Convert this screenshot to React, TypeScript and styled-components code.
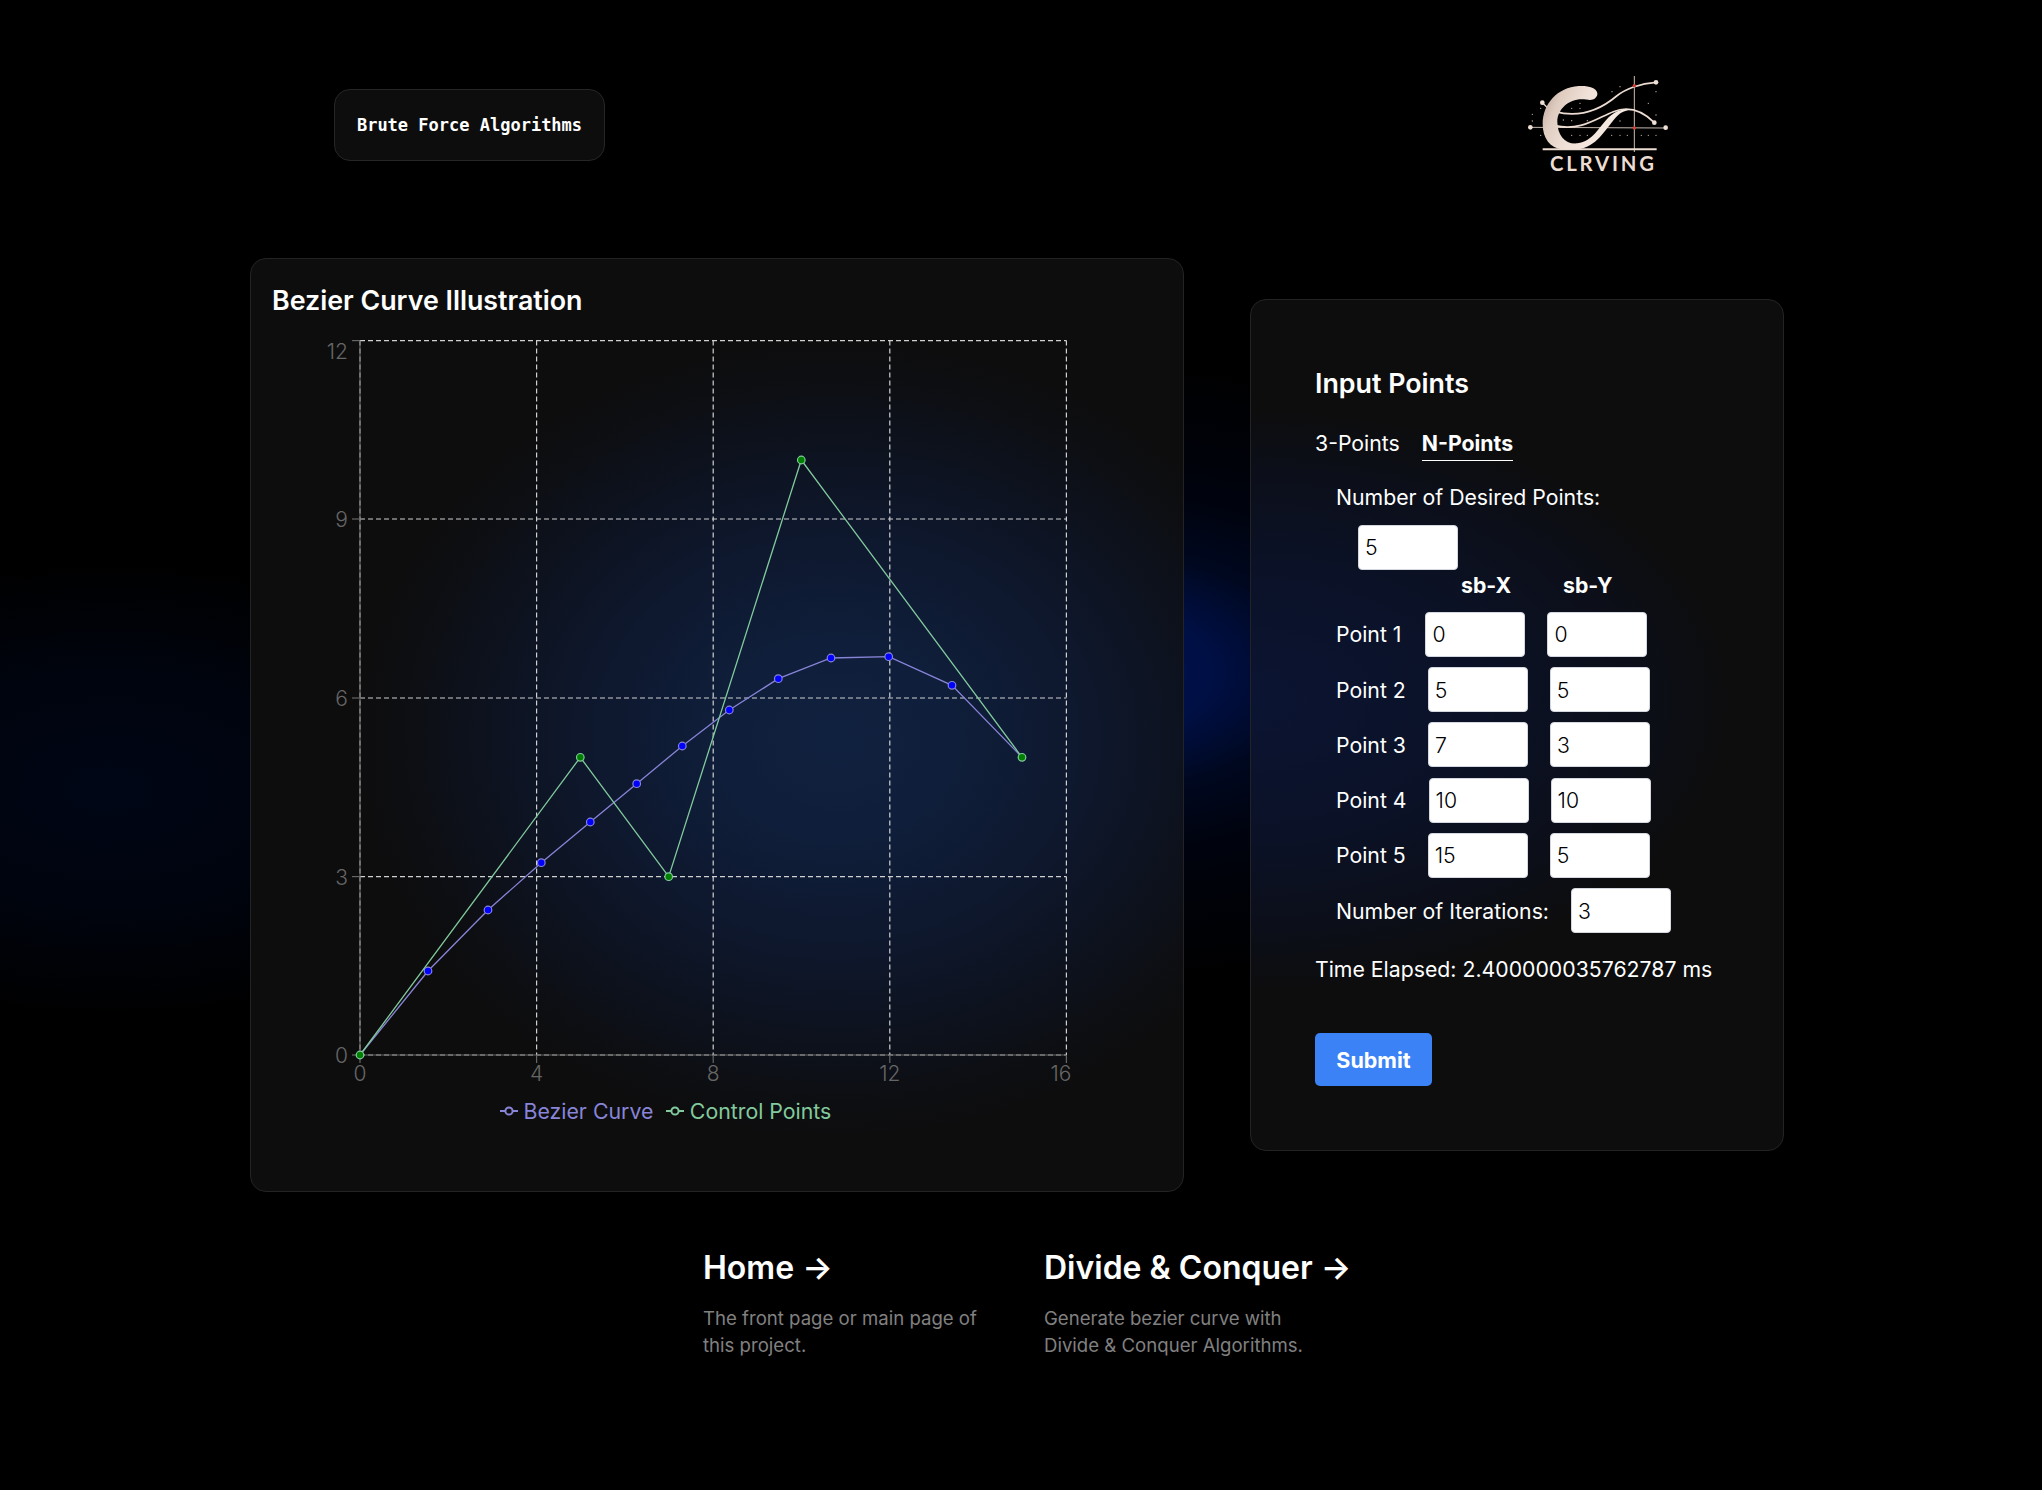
import React from "react";
import styled, { createGlobalStyle } from "styled-components";

const Global = createGlobalStyle`
  html, body { margin: 0; padding: 0; background: #000; }
  body { font-family: Inter, "Noto Sans", sans-serif; color: #fff; }
  * { box-sizing: border-box; }
`;

const Page = styled.div`
  width: 2042px;
  height: 1490px;
  overflow: hidden;
  background:
    radial-gradient(ellipse 760px 320px at 1000px 672px,
      rgba(0, 22, 96, 1) 0%, rgba(0, 15, 68, 1) 28%, rgba(0, 8, 32, 1) 42%, rgba(0, 3, 14, 1) 60%, rgba(0, 0, 0, 0) 100%),
    radial-gradient(ellipse 420px 230px at 110px 790px,
      rgba(0, 6, 22, 1) 0%, rgba(0, 4, 14, 1) 50%, rgba(0, 0, 0, 0) 100%),
    #000;
`;

const Header = styled.header`
  display: flex;
  justify-content: space-between;
  align-items: center;
  height: 190px;
  padding: 60px 342px 0 334px;
`;

const Badge = styled.div`
  width: 271px;
  height: 72px;
  display: flex;
  align-items: center;
  justify-content: center;
  background: #0d0d0d;
  border: 1px solid #262626;
  border-radius: 16px;
  font-family: "DejaVu Sans Mono", monospace;
  font-weight: 700;
  font-size: 17px;
`;

const Main = styled.main`
  display: flex;
  align-items: center;
  gap: 66px;
  margin-top: 68px;
  padding-left: 250px;
`;

const ChartCard = styled.section`
  width: 934px;
  height: 934px;
  padding: 25px 21px 0;
  border: 1px solid #232323;
  border-radius: 16px;
  background:
    radial-gradient(ellipse 480px 400px at 585px 480px,
      #10213f 0%, #0f1e3a 25%, #0e182e 50%, #0d121e 74%, #0d0e11 92%, #0d0d0e 100%),
    #0d0d0d;
`;

const CardTitle = styled.h2`
  margin: 0;
  font-size: 26.8px;
  line-height: 32px;
  font-weight: 600;
`;

const ChartSvg = styled.svg`
  display: block;
  width: 840px;
  height: 780px;
`;

const AxisText = styled.text`
  font-family: Inter, sans-serif;
  font-size: 21px;
  font-weight: 300;
  fill: #666;
`;

const Legend = styled.div`
  display: flex;
  align-items: center;
  margin: 2px 0 0 228px;
  font-size: 21.3px;
  line-height: 26px;
  font-weight: 400;
`;

const LegendItem = styled.div<{ $color: string }>`
  display: flex;
  align-items: center;
  gap: 5.5px;
  margin-right: 13px;
  color: ${(p) => p.$color};
`;

const InputCard = styled.section`
  width: 534px;
  padding: 67px 64px 64px;
  border: 1px solid #232323;
  border-radius: 16px;
  background:
    radial-gradient(ellipse 480px 290px at 0px 400px,
      #0b1432 0%, #0b1228 45%, #0c0f1a 78%, #0d0d0e 100%),
    #0d0d0d;
`;

const TabRow = styled.div`
  display: flex;
  gap: 22px;
  margin-top: 32px;
`;

const Tab = styled.div<{ $active?: boolean }>`
  font-size: 21.25px;
  line-height: 24px;
  padding-bottom: 5px;
  font-weight: ${(p) => (p.$active ? 700 : 400)};
  border-bottom: 1px solid ${(p) => (p.$active ? "#fff" : "transparent")};
`;

const Form = styled.div`
  display: flex;
  flex-direction: column;
  padding-left: 21px;
  margin-top: 24px;
`;

const Label = styled.label`
  font-size: 21.25px;
  line-height: 24px;
  white-space: nowrap;
`;

const NumberInput = styled.input`
  width: 100px;
  height: 45px;
  padding: 0 6px;
  border: 1px solid #d4d7e0;
  border-radius: 4px;
  background: #fff;
  color: #000;
  font-family: Inter, sans-serif;
  font-size: 21.25px;
  font-weight: 300;
`;

const DesiredInput = styled(NumberInput)`
  margin: 16px 0 0 22px;
`;

const AxisHeader = styled.div`
  display: flex;
  gap: 52px;
  padding-left: 125px;
  margin-top: 3px;
  font-size: 21.25px;
  line-height: 24px;
  font-weight: 700;
`;

const Rows = styled.div`
  display: flex;
  flex-direction: column;
  gap: 10.25px;
  margin-top: 15px;
`;

const Row = styled.div<{ $labelGap?: number }>`
  display: flex;
  align-items: center;
  gap: 22px;
  label { margin-right: ${(p) => p.$labelGap ?? 0}px; }
`;

const Elapsed = styled.div`
  margin-top: 24px;
  font-size: 21.25px;
  line-height: 24px;
  white-space: nowrap;
`;

const Submit = styled.button`
  display: block;
  width: 117px;
  height: 53px;
  margin-top: 52px;
  border: 0;
  border-radius: 5px;
  background: #3b82f6;
  color: #fff;
  font-family: Inter, sans-serif;
  font-size: 21.5px;
  font-weight: 700;
`;

const Footer = styled.nav`
  display: flex;
  margin-top: 58px;
  padding-left: 703px;
`;

const FooterLink = styled.a`
  display: block;
  width: 341px;
  color: #fff;
  text-decoration: none;
`;

const LinkTitle = styled.h3`
  margin: 0;
  font-size: 32px;
  line-height: 36px;
  font-weight: 600;
`;

const LinkText = styled.p`
  margin: 19px 0 0;
  width: 290px;
  font-size: 18.6px;
  line-height: 27px;
  color: #808080;
`;

const X = [360, 536.6, 713.2, 889.8, 1066.4];
const Y = [1055, 876.6, 698, 519, 340.6];
const XL = ["0", "4", "8", "12", "16"];
const YL = ["0", "3", "6", "9", "12"];

const bezier: [number, number][] = [
  [360, 1055], [428, 971], [488, 910], [541.3, 862.7], [590.3, 822], [636.7, 783.7], [682.3, 746],
  [729.3, 710], [778.3, 678.7], [831, 658], [888.7, 656.7], [952, 685.3], [1022, 757.3],
];
const control: [number, number][] = [
  [360, 1055], [580.3, 757.3], [668.7, 876.7], [801.3, 460], [1022, 757.3],
];
const pts = (a: [number, number][]) => a.map((p) => p.join(",")).join(" ");

const Chart = () => (
  <ChartSvg viewBox="272 316 840 780">
    <g stroke="#d0d0d0" strokeWidth="1.2" strokeDasharray="5 3" fill="none">
      {Y.map((y) => <line key={y} x1={360} x2={1066.4} y1={y} y2={y} />)}
      {X.map((x) => <line key={x} x1={x} x2={x} y1={340.6} y2={1055} />)}
    </g>
    <g stroke="#666" strokeWidth="1.2">
      <line x1={360} x2={360} y1={340.6} y2={1055} />
      <line x1={360} x2={1066.4} y1={1055} y2={1055} />
      {Y.map((y) => <line key={y} x1={352} x2={360} y1={y} y2={y} />)}
      {X.map((x) => <line key={x} x1={x} x2={x} y1={1055} y2={1063} />)}
    </g>
    {Y.map((y, i) => (
      <AxisText key={y} x={348} y={(i === 4 ? y + 10 : y) + 8} textAnchor="end">{YL[i]}</AxisText>
    ))}
    {X.map((x, i) => (
      <AxisText key={x} x={i === 4 ? 1061 : x} y={1081} textAnchor="middle">{XL[i]}</AxisText>
    ))}
    <polyline points={pts(bezier)} fill="none" stroke="#8884d8" strokeWidth="1.3" />
    {bezier.map((p, i) => (
      <circle key={i} cx={p[0]} cy={p[1]} r="3.8" fill={i === 0 || i === 12 ? "none" : "#0000ff"} stroke={i === 0 || i === 12 ? "none" : "#8884d8"} strokeWidth="1.2" />
    ))}
    <polyline points={pts(control)} fill="none" stroke="#82ca9d" strokeWidth="1.3" />
    {control.map((p, i) => (
      <circle key={i} cx={p[0]} cy={p[1]} r="3.8" fill="#008000" stroke="#82ca9d" strokeWidth="1.2" />
    ))}
  </ChartSvg>
);

const LegendIcon = ({ color }: { color: string }) => (
  <svg width="18" height="14" viewBox="0 0 18 14">
    <path d="M0 7h5M13 7h5" stroke={color} strokeWidth="2" />
    <circle cx="9" cy="7" r="3.6" fill="none" stroke={color} strokeWidth="2" />
  </svg>
);

const Logo = () => (
  <svg width="200" height="130" viewBox="0 0 600 390">
    <defs>
      <linearGradient id="cg" x1="0" x2="1" y1="0" y2="0.3">
        <stop offset="0" stopColor="#b59c8f" />
        <stop offset="0.22" stopColor="#dfccc0" />
        <stop offset="0.5" stopColor="#f1e2d9" />
        <stop offset="1" stopColor="#f6ebe3" />
      </linearGradient>
    </defs>
    <g stroke="#ecdcd1" fill="none">
      <line x1="90" y1="202" x2="497" y2="204" strokeWidth="2.5" />
      <line x1="403" y1="48" x2="403" y2="276" strokeWidth="3" stroke="#cdbbae" />
      <line x1="127" y1="128" x2="152" y2="152" strokeWidth="4" />
      <path d="M165 155C240 175 300 150 350 108C375 88 420 70 468 67" strokeWidth="5" />
      <path d="M165 197C240 215 290 175 340 155C385 138 425 150 463 188" strokeWidth="5" />
      <line x1="128" y1="268" x2="470" y2="268" strokeWidth="6" />
    </g>
    <path
      fill="url(#cg)"
      d="M292 100C290 82 262 76 236 78C172 82 128 132 128 192C128 234 150 264 186 268L234 268C290 262 316 208 348 172C362 156 380 150 402 148C372 144 346 152 326 172C296 202 280 244 232 250C196 254 172 226 172 185C172 148 206 118 245 118C262 118 276 124 286 114C291 109 293 104 292 100Z"
    />
    <g fill="#efe0d6">
      <circle cx="127" cy="128" r="7" />
      <circle cx="91" cy="202" r="7" />
      <circle cx="468" cy="67" r="7" />
      <circle cx="463" cy="188" r="7" />
      <circle cx="497" cy="203" r="7" />
    </g>
    <g fill="#d93b36">
      <circle cx="403" cy="77" r="5" />
      <circle cx="403" cy="204" r="5" />
    </g>
    <g fill="#c4b0a4">
      {[[97,163],[97,183],[122,145],[122,226],[190,180],[215,182],[240,130],[215,145],[240,145],[262,182],[336,95],[360,80],[468,95],[445,130],[468,165],[215,226],[240,226],[262,226],[335,226],[360,226],[382,226],[424,226],[445,226],[468,226],[360,183]].map((d, i) => (
        <circle key={i} cx={d[0]} cy={d[1]} r="2" />
      ))}
    </g>
    <text x="150" y="332" fontFamily="Lato, sans-serif" fontSize="61" fontWeight="700" fill="#ecdcd1" textLength="312" lengthAdjust="spacing">CLRVING</text>
  </svg>
);

const rows: [string, string, string, number][] = [
  ["Point 1", "0", "0", 2],
  ["Point 2", "5", "5", 0],
  ["Point 3", "7", "3", 0],
  ["Point 4", "10", "10", 0],
  ["Point 5", "15", "5", 0],
];

export default function App() {
  return (
    <Page>
      <Global />
      <Header>
        <Badge>Brute Force Algorithms</Badge>
        <Logo />
      </Header>
      <Main>
        <ChartCard>
          <CardTitle>Bezier Curve Illustration</CardTitle>
          <Chart />
          <Legend>
            <LegendItem $color="#8884d8"><LegendIcon color="#8884d8" />Bezier Curve</LegendItem>
            <LegendItem $color="#82ca9d"><LegendIcon color="#82ca9d" />Control Points</LegendItem>
          </Legend>
        </ChartCard>
        <InputCard>
          <CardTitle>Input Points</CardTitle>
          <TabRow>
            <Tab>3-Points</Tab>
            <Tab $active>N-Points</Tab>
          </TabRow>
          <Form>
            <Label>Number of Desired Points:</Label>
            <DesiredInput defaultValue="5" />
            <AxisHeader><span>sb-X</span><span>sb-Y</span></AxisHeader>
            <Rows>
              {rows.map((r) => (
                <Row key={r[0]} $labelGap={r[3]}>
                  <Label>{r[0]}</Label>
                  <NumberInput defaultValue={r[1]} />
                  <NumberInput defaultValue={r[2]} />
                </Row>
              ))}
              <Row>
                <Label>Number of Iterations:</Label>
                <NumberInput defaultValue="3" />
              </Row>
            </Rows>
          </Form>
          <Elapsed>Time Elapsed: 2.400000035762787 ms</Elapsed>
          <Submit>Submit</Submit>
        </InputCard>
      </Main>
      <Footer>
        <FooterLink href="#">
          <LinkTitle>Home →</LinkTitle>
          <LinkText>The front page or main page of this project.</LinkText>
        </FooterLink>
        <FooterLink href="#">
          <LinkTitle>Divide &amp; Conquer →</LinkTitle>
          <LinkText>Generate bezier curve with Divide &amp; Conquer Algorithms.</LinkText>
        </FooterLink>
      </Footer>
    </Page>
  );
}
